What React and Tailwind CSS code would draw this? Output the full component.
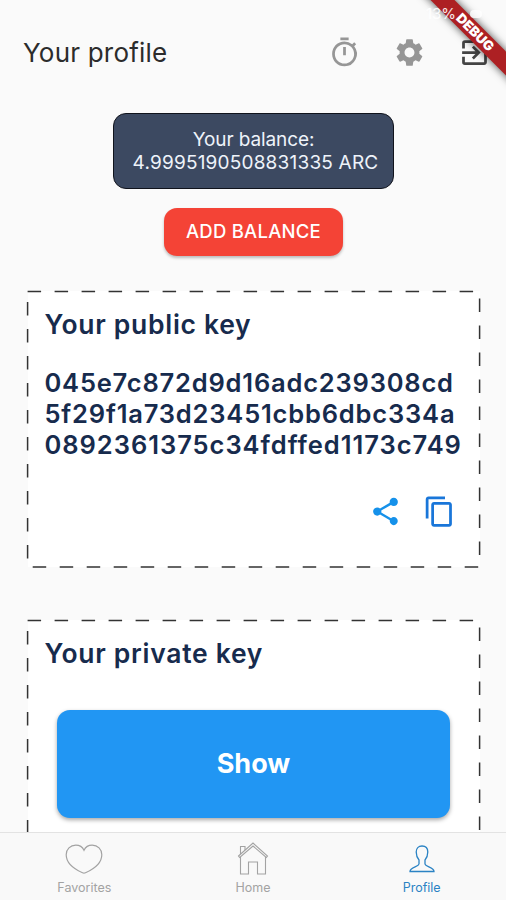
import React from "react";
import { MdOutlineTimer, MdSettings, MdExitToApp, MdShare, MdContentCopy } from "react-icons/md";

const publicKey = [
  { text: "045e7c872d9d16adc239308cd", tracking: "tracking-[0.8px]" },
  { text: "5f29f1a73d23451cbb6dbc334a", tracking: "tracking-[0.82px]" },
  { text: "0892361375c34fdffed1173c749", tracking: "tracking-[0.97px]" },
];

const DashedCard = ({ title, children }) => (
  <section className="relative h-[276px] w-[452px] shrink-0 bg-white pl-[16.5px] pt-[17px]">
    <svg className="absolute inset-0 overflow-visible" width="452" height="276" fill="none">
      <rect x="-0.4" y="0.4" width="452" height="275.6" stroke="#333333" strokeWidth="1.5" strokeDasharray="13.5 13.5" />
    </svg>
    <h2 className="whitespace-nowrap text-[26.5px] leading-8 font-semibold tracking-[0.7px] text-[#172b4d]">{title}</h2>
    {children}
  </section>
);

const DebugBanner = () => (
  <div className="absolute top-0 right-0 size-[90px] overflow-hidden">
    <div className="absolute top-[24px] left-[-21px] flex h-[17px] w-[160px] rotate-45 items-center justify-center bg-[#ad2023] text-[13.5px] font-black text-white shadow-[0_0_9px_rgba(0,0,0,0.7)]">
      DEBUG
    </div>
  </div>
);

const HeartIcon = () => (
  <svg width="38" height="30" viewBox="0 0 38 30" fill="none" stroke="currentColor" strokeWidth="1.2">
    <path d="M19 6.300C17.500 3 14.500 1.200 10.800 1.200C5.300 1.200 1.200 5.200 1.200 10.700C1.200 18.500 8 24.500 17.500 28.700Q19 29.400 20.500 28.700C30 24.500 36.800 18.500 36.800 10.700C36.800 5.200 32.700 1.200 27.200 1.200C23.500 1.200 20.500 3 19 6.300Z" />
  </svg>
);

const HomeIcon = () => (
  <svg width="32" height="33" viewBox="0 0 32 33" fill="none" stroke="currentColor" strokeWidth="1.1">
    <path d="M1.500 14L16 1L30.500 14L29.300 15.500L16 4L2.700 15.500Z" />
    <path d="M3.500 15V32H11.500V20H20.500V32H28.500V15" />
    <path d="M3.500 12V4.500H8V8" />
  </svg>
);

const PersonIcon = () => (
  <svg width="26" height="28" viewBox="0 0 26 28" fill="none" stroke="currentColor" strokeWidth="1.3">
    <path d="M13 1C9.500 1 7.200 3.300 7.200 7C7.200 11 8.300 13 10 15V19C9.500 22 1 22 1 26.500H25C25 22 16.500 22 16 19V15C17.700 13 18.800 11 18.800 7C18.800 3.300 16.500 1 13 1Z" />
  </svg>
);

const tabs = [
  { label: "Favorites", Icon: HeartIcon },
  { label: "Home", Icon: HomeIcon },
  { label: "Profile", Icon: PersonIcon, active: true },
];

const App = () => {
  return (
    <div className="relative flex h-[900px] w-[506px] flex-col overflow-hidden bg-[#fafafa] font-[Inter,sans-serif]">
      {/* Status bar */}
      <div className="relative z-10 flex h-[26px] items-start justify-end gap-[14px] pr-[24px] pt-[6px] text-white/90">
        <span className="text-[15px] leading-4">13%</span>
        <span className="mt-1 h-2 w-3 rounded-sm bg-white/80" />
      </div>

      {/* Header */}
      <header className="flex h-[52px] items-center justify-between pl-[23px] pr-[15px]">
        <h1 className="whitespace-nowrap text-[26px] tracking-[0.2px] text-[#2c2c2c]">Your profile</h1>
        <div className="flex items-center gap-8 text-[#969696]">
          <MdOutlineTimer size={33} />
          <MdSettings size={33} />
          <MdExitToApp size={33} className="text-[#444444]" />
        </div>
      </header>

      {/* Content */}
      <main className="flex min-h-0 flex-1 flex-col items-center overflow-hidden pt-[35px] pl-[2px]">
        <div className="mr-px flex h-[76px] w-[281px] shrink-0 flex-col items-center justify-center rounded-[13px] border-[1.5px] border-[#10131c] bg-[#3c4961] text-[19px] leading-[23px] whitespace-nowrap text-[#eef3fa]">
          <p className="tracking-[-0.1px]">Your balance:</p>
          <p className="ml-[4px] tracking-[0.2px]">4.9995190508831335 ARC</p>
        </div>
        <button className="mr-px mt-[19px] h-[48px] w-[179px] shrink-0 rounded-[13px] bg-[#f44336] text-[18.5px] font-medium tracking-[0.25px] whitespace-nowrap text-white shadow-[0_2px_3px_rgba(0,0,0,0.25)]">
          ADD BALANCE
        </button>

        <div className="mt-[35px] flex flex-col gap-[53px]">
          <DashedCard title="Your public key">
            <div className="mt-[27px] text-[25.5px] leading-[31px] font-semibold whitespace-nowrap text-[#172b4d]">
              {publicKey.map((line) => (
                <p key={line.text} className={line.tracking}>{line.text}</p>
              ))}
            </div>
            <div className="mt-[35px] flex justify-end gap-[21px] pr-[24px]">
              <MdShare size={33} className="text-[#1591ea]" />
              <MdContentCopy size={33} className="text-[#1976d9]" />
            </div>
          </DashedCard>
          <DashedCard title="Your private key">
            <button className="mt-[41px] ml-[12.5px] h-[108px] w-[393px] rounded-[13px] bg-[#2196f3] text-[27px] font-bold text-white shadow-[0_2px_4px_rgba(0,0,0,0.35)]">
              Show
            </button>
          </DashedCard>
        </div>
      </main>

      {/* Tab bar */}
      <nav className="flex h-[68px] shrink-0 border-t border-[#e3e3e3] bg-[#f9f9f9]">
        {tabs.map(({ label, Icon, active }) => (
          <div key={label} className={`flex flex-1 flex-col items-center ${active ? "text-[#2b83c4]" : "text-[#a3a3a3]"}`}>
            <div className="flex h-[47px] items-center pt-1">
              <Icon />
            </div>
            <span className="text-[12.5px] leading-4">{label}</span>
          </div>
        ))}
      </nav>

      <DebugBanner />
    </div>
  );
};

export default App;
